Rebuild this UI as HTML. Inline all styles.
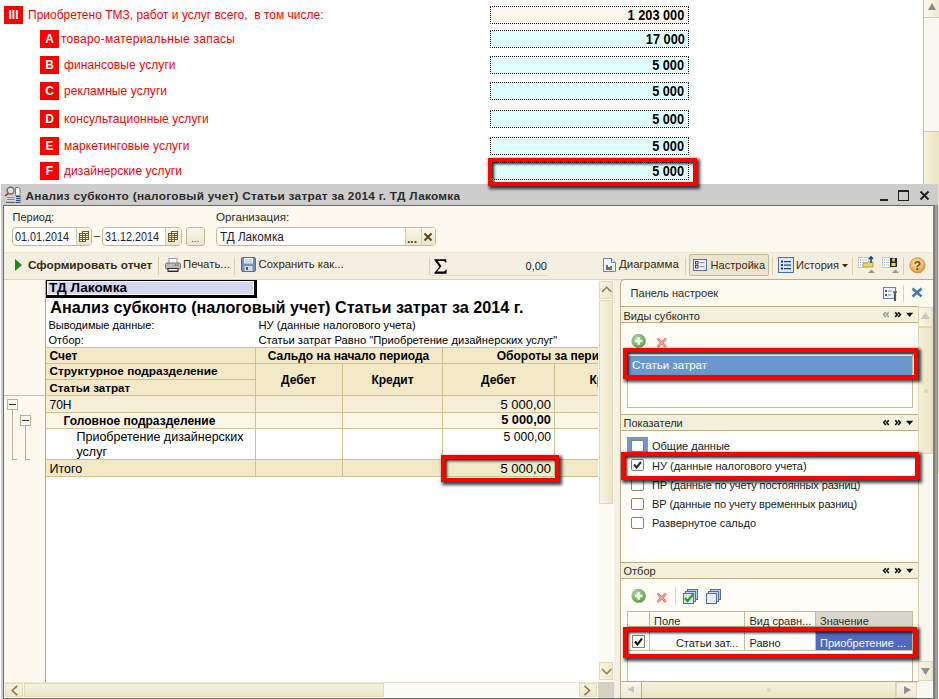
<!DOCTYPE html>
<html><head><meta charset="utf-8"><style>
*{margin:0;padding:0;box-sizing:border-box}
html,body{width:939px;height:699px;overflow:hidden;background:#fff}
body{position:relative;font-family:"Liberation Sans",sans-serif}
.a{position:absolute}
.t{position:absolute;white-space:nowrap;line-height:1}
</style></head><body>
<div class="a" style="left:4px;top:6px;width:19px;height:18px;background:#ff0000"></div>
<div class="t" style="left:-286.5px;width:600px;text-align:center;top:8.84px;font-size:12px;font-weight:bold;color:#fff;">III</div>
<div class="t" style="left:28px;top:8.84px;font-size:12px;font-weight:normal;color:#ff0000;">Приобретено ТМЗ, работ и услуг всего,&nbsp; в том числе:</div>
<div class="a" style="left:490px;top:6px;width:199px;height:18px;background:#fff8ee;border:1px dotted #000;border-radius:1px"></div>
<div class="t" style="right:254.5px;top:8.35px;font-size:14px;font-weight:bold;color:#000;transform:scaleX(0.91);transform-origin:100% 50%">1 203 000</div>
<div class="a" style="left:40px;top:30px;width:19px;height:18px;background:#ff0000"></div>
<div class="t" style="left:-250.5px;width:600px;text-align:center;top:32.84px;font-size:12px;font-weight:bold;color:#fff;">A</div>
<div class="t" style="left:61px;top:32.84px;font-size:12px;font-weight:normal;color:#ff0000;letter-spacing:0.25px">товаро-материальные запасы</div>
<div class="a" style="left:490px;top:30px;width:199px;height:18px;background:#e0ffff;border:1px dotted #000;border-radius:1px"></div>
<div class="t" style="right:254.5px;top:32.35px;font-size:14px;font-weight:bold;color:#000;transform:scaleX(0.91);transform-origin:100% 50%">17 000</div>
<div class="a" style="left:40px;top:56px;width:19px;height:18px;background:#ff0000"></div>
<div class="t" style="left:-250.5px;width:600px;text-align:center;top:58.84px;font-size:12px;font-weight:bold;color:#fff;">B</div>
<div class="t" style="left:64px;top:58.84px;font-size:12px;font-weight:normal;color:#ff0000;letter-spacing:0.08px">финансовые услуги</div>
<div class="a" style="left:490px;top:56px;width:199px;height:18px;background:#e0ffff;border:1px dotted #000;border-radius:1px"></div>
<div class="t" style="right:254.5px;top:58.35px;font-size:14px;font-weight:bold;color:#000;transform:scaleX(0.91);transform-origin:100% 50%">5 000</div>
<div class="a" style="left:40px;top:82px;width:19px;height:18px;background:#ff0000"></div>
<div class="t" style="left:-250.5px;width:600px;text-align:center;top:84.84px;font-size:12px;font-weight:bold;color:#fff;">C</div>
<div class="t" style="left:64px;top:84.84px;font-size:12px;font-weight:normal;color:#ff0000;letter-spacing:0.08px">рекламные услуги</div>
<div class="a" style="left:490px;top:82px;width:199px;height:18px;background:#e0ffff;border:1px dotted #000;border-radius:1px"></div>
<div class="t" style="right:254.5px;top:84.35px;font-size:14px;font-weight:bold;color:#000;transform:scaleX(0.91);transform-origin:100% 50%">5 000</div>
<div class="a" style="left:40px;top:110px;width:19px;height:18px;background:#ff0000"></div>
<div class="t" style="left:-250.5px;width:600px;text-align:center;top:112.84px;font-size:12px;font-weight:bold;color:#fff;">D</div>
<div class="t" style="left:64px;top:112.84px;font-size:12px;font-weight:normal;color:#ff0000;letter-spacing:0.08px">консультационные услуги</div>
<div class="a" style="left:490px;top:110px;width:199px;height:18px;background:#e0ffff;border:1px dotted #000;border-radius:1px"></div>
<div class="t" style="right:254.5px;top:112.35px;font-size:14px;font-weight:bold;color:#000;transform:scaleX(0.91);transform-origin:100% 50%">5 000</div>
<div class="a" style="left:40px;top:137px;width:19px;height:18px;background:#ff0000"></div>
<div class="t" style="left:-250.5px;width:600px;text-align:center;top:139.84px;font-size:12px;font-weight:bold;color:#fff;">E</div>
<div class="t" style="left:64px;top:139.84px;font-size:12px;font-weight:normal;color:#ff0000;letter-spacing:0.08px">маркетинговые услуги</div>
<div class="a" style="left:490px;top:137px;width:199px;height:18px;background:#e0ffff;border:1px dotted #000;border-radius:1px"></div>
<div class="t" style="right:254.5px;top:139.35px;font-size:14px;font-weight:bold;color:#000;transform:scaleX(0.91);transform-origin:100% 50%">5 000</div>
<div class="a" style="left:40px;top:162px;width:19px;height:18px;background:#ff0000"></div>
<div class="t" style="left:-250.5px;width:600px;text-align:center;top:164.84px;font-size:12px;font-weight:bold;color:#fff;">F</div>
<div class="t" style="left:64px;top:164.84px;font-size:12px;font-weight:normal;color:#ff0000;letter-spacing:0.08px">дизайнерские услуги</div>
<div class="a" style="left:490px;top:162px;width:199px;height:18px;background:#e0ffff;border:1px dotted #000;border-radius:1px"></div>
<div class="t" style="right:254.5px;top:164.35px;font-size:14px;font-weight:bold;color:#000;transform:scaleX(0.91);transform-origin:100% 50%">5 000</div>
<div class="a" style="left:923px;top:0px;width:16px;height:184px;background:#f8f7f1;border-left:1px solid #c8c1a0"></div>
<div class="a" style="left:924px;top:0px;width:15px;height:18px;background:linear-gradient(90deg,#fbf9ef,#efe9cf);border-bottom:1px solid #d3cca8"></div>
<svg class="a" style="left:927px;top:3px" width="10" height="10" viewBox="0 0 10 10"><path d="M5 0 L9 7 L1 7 Z" fill="#8a8a8a"/></svg>
<div class="a" style="left:924px;top:131px;width:15px;height:53px;background:linear-gradient(90deg,#f6f2dc,#ebe4c2);border-top:1px solid #d3cca8"></div>
<div class="a" style="left:1px;top:184px;width:937px;height:515px;background:#cdcdcd"></div>
<div class="t" style="left:25.5px;top:191.01px;font-size:11.8px;font-weight:bold;color:#2b2b2b;letter-spacing:0.28px">Анализ субконто (налоговый учет) Статьи затрат за 2014 г. ТД Лакомка</div>
<div class="a" style="left:880px;top:199px;width:8px;height:2px;background:#222"></div>
<div class="a" style="left:898px;top:190px;width:11px;height:11px;border:1px solid #222;border-top-width:2px"></div>
<svg class="a" style="left:919px;top:190px" width="11" height="11" viewBox="0 0 11 11"><path d="M1.5 1.5 L9.5 9.5 M9.5 1.5 L1.5 9.5" stroke="#222" stroke-width="2"/></svg>
<div class="a" style="left:3px;top:205px;width:932px;height:494px;background:#fdf9ee;border-left:1px solid #6a6a6a;border-top:1px solid #6a6a6a;border-right:1px solid #6a6a6a;border-bottom:1px solid #6a6a6a"></div>
<div class="t" style="left:12.5px;top:211.69px;font-size:11px;font-weight:normal;color:#2a2a2a;">Период:</div>
<div class="t" style="left:216px;top:211.18px;font-size:11.6px;font-weight:normal;color:#2a2a2a;">Организация:</div>
<div class="a" style="left:12px;top:227px;width:80px;height:19px;background:#fff;border:1px solid #c5bb93;border-radius:4px"></div>
<div class="a" style="left:102px;top:227px;width:80px;height:19px;background:#fff;border:1px solid #c5bb93;border-radius:4px"></div>
<div class="a" style="left:186px;top:227px;width:19px;height:19px;background:linear-gradient(#fbf8ec,#ece5cc);border:1px solid #c5bb93;border-radius:3px"></div>
<div class="t" style="left:191px;top:233.53px;font-size:10px;font-weight:normal;color:#555;">...</div>
<div class="t" style="left:15px;top:231.27px;font-size:12.2px;font-weight:normal;color:#1a1a3a;transform:scaleX(0.885);transform-origin:0 50%">01.01.2014</div>
<div class="t" style="left:105px;top:231.27px;font-size:12.2px;font-weight:normal;color:#1a1a3a;transform:scaleX(0.885);transform-origin:0 50%">31.12.2014</div>
<div class="a" style="left:76px;top:228px;width:15px;height:17px;background:linear-gradient(#fbf8ec,#ece5cc);border-left:1px solid #d6cfb0;border-radius:0 2px 2px 0"></div>
<div class="a" style="left:165px;top:228px;width:16px;height:17px;background:linear-gradient(#fbf8ec,#ece5cc);border-left:1px solid #d6cfb0;border-radius:0 2px 2px 0"></div>
<div class="t" style="left:94px;top:229.69px;font-size:11px;font-weight:normal;color:#222;">–</div>
<div class="a" style="left:216px;top:227px;width:220px;height:19px;background:#fff;border:1px solid #c5bb93;border-radius:4px"></div>
<div class="a" style="left:405px;top:228px;width:16px;height:17px;background:linear-gradient(#fbf8ec,#ece5cc);border-left:1px solid #d6cfb0"></div>
<div class="a" style="left:421px;top:228px;width:14px;height:17px;background:linear-gradient(#fbf8ec,#ece5cc);border-left:1px solid #d6cfb0;border-radius:0 2px 2px 0"></div>
<div class="t" style="left:219.5px;top:231.27px;font-size:12.2px;font-weight:normal;color:#1a1a3a;transform:scaleX(0.96);transform-origin:0 50%">ТД Лакомка</div>
<div class="t" style="left:407px;top:232.84px;font-size:12px;font-weight:bold;color:#5a4210;">...</div>
<svg class="a" style="left:423px;top:232px" width="10" height="10" viewBox="0 0 10 10"><path d="M1.5 1.5 L8.5 8.5 M8.5 1.5 L1.5 8.5" stroke="#5a4210" stroke-width="1.8"/></svg>
<div class="a" style="left:4px;top:252px;width:930px;height:28px;background:#f5efe2;border-top:1px solid #ece6d6;border-bottom:1px solid #d8d2c0"></div>
<svg class="a" style="left:15px;top:259px" width="8" height="13" viewBox="0 0 8 13"><path d="M0 0 L7 6 L0 12 Z" fill="#1a8a1a"/></svg>
<div class="t" style="left:28px;top:259.05px;font-size:11.75px;font-weight:bold;color:#3a2a10;">Сформировать отчет</div>
<div class="t" style="left:183px;top:259.35px;font-size:11.4px;font-weight:normal;color:#3a2a10;">Печать...</div>
<div class="t" style="left:258.5px;top:259.43px;font-size:11.3px;font-weight:normal;color:#3a2a10;">Сохранить как...</div>
<div class="t" style="left:619px;top:259.27px;font-size:11.5px;font-weight:normal;color:#3a2a10;">Диаграмма</div>
<div class="t" style="left:796px;top:259.60px;font-size:11.1px;font-weight:normal;color:#3a2a10;">История</div>
<div class="t" style="right:392px;top:260.69px;font-size:11px;font-weight:normal;color:#1a1a3a;">0,00</div>
<svg class="a" style="left:434px;top:259px" width="13" height="15" viewBox="0 0 13 15"><path d="M0.3 0.3 H12.2 L12.4 3.6 H11.4 Q11 1.9 9.2 1.9 H3.6 L7.6 7.2 L3 12.6 H9.6 Q11.4 12.6 11.8 10.8 H12.8 L12.4 14.7 H0.3 V13.9 L5.3 7.8 L0.3 1.1 Z" fill="#000"/></svg>
<div class="a" style="left:4px;top:280px;width:610px;height:418px;background:#fff"></div>
<div class="a" style="left:4px;top:280px;width:42px;height:402px;background:#fdf9ee;border-right:1px solid #b7ad85"></div>
<div class="a" style="left:46px;top:280px;width:552px;height:402px;overflow:hidden">
<div class="a" style="left:0px;top:0px;width:211px;height:18px;background:#000"></div>
<div class="a" style="left:1px;top:1px;width:207px;height:14px;background:#fff"></div>
<div class="a" style="left:2px;top:2px;width:205px;height:12px;background:#d3d7ee"></div>
<div class="t" style="left:3px;top:1.39px;font-size:13.6px;font-weight:bold;color:#000;">ТД Лакомка</div>
<div class="t" style="left:4.299999999999997px;top:18.99px;font-size:16.2px;font-weight:bold;color:#000;">Анализ субконто (налоговый учет) Статьи затрат за 2014 г.</div>
<div class="t" style="left:2.5px;top:39.99px;font-size:11px;font-weight:normal;color:#000;">Выводимые данные:</div>
<div class="t" style="left:212.5px;top:39.82px;font-size:11.2px;font-weight:normal;color:#000;">НУ (данные налогового учета)</div>
<div class="t" style="left:2.5px;top:54.99px;font-size:11px;font-weight:normal;color:#000;">Отбор:</div>
<div class="t" style="left:212.5px;top:54.82px;font-size:11.2px;font-weight:normal;color:#000;">Статьи затрат Равно "Приобретение дизайнерских услуг"</div>
<div class="a" style="left:0px;top:67px;width:552px;height:49px;background:#f3e9c7"></div>
<div class="a" style="left:0px;top:67px;width:552px;height:1px;background:#cfc290"></div>
<div class="a" style="left:0px;top:83px;width:552px;height:1px;background:#cfc290"></div>
<div class="a" style="left:0px;top:99px;width:209px;height:1px;background:#cfc290"></div>
<div class="a" style="left:0px;top:115px;width:552px;height:1px;background:#cfc290"></div>
<div class="a" style="left:209px;top:67px;width:1px;height:16px;background:#cfc290"></div>
<div class="a" style="left:396px;top:67px;width:1px;height:16px;background:#cfc290"></div>
<div class="a" style="left:620px;top:67px;width:1px;height:16px;background:#cfc290"></div>
<div class="a" style="left:209px;top:83px;width:1px;height:32px;background:#cfc290"></div>
<div class="a" style="left:296px;top:83px;width:1px;height:32px;background:#cfc290"></div>
<div class="a" style="left:396px;top:83px;width:1px;height:32px;background:#cfc290"></div>
<div class="a" style="left:508px;top:83px;width:1px;height:32px;background:#cfc290"></div>
<div class="a" style="left:620px;top:83px;width:1px;height:32px;background:#cfc290"></div>
<div class="t" style="left:3.5px;top:69.54px;font-size:12px;font-weight:bold;color:#000;">Счет</div>
<div class="t" style="left:3.5px;top:85.71px;font-size:11.8px;font-weight:bold;color:#000;">Структурное подразделение</div>
<div class="t" style="left:3.5px;top:101.68px;font-size:11.6px;font-weight:bold;color:#000;">Статьи затрат</div>
<div class="t" style="left:2.5px;width:600px;text-align:center;top:69.54px;font-size:12px;font-weight:bold;color:#000;">Сальдо на начало периода</div>
<div class="t" style="left:209.29999999999995px;width:600px;text-align:center;top:69.54px;font-size:12px;font-weight:bold;color:#000;">Обороты за период</div>
<div class="t" style="left:-47.5px;width:600px;text-align:center;top:94.04px;font-size:12px;font-weight:bold;color:#000;">Дебет</div>
<div class="t" style="left:46.5px;width:600px;text-align:center;top:94.04px;font-size:12px;font-weight:bold;color:#000;">Кредит</div>
<div class="t" style="left:152.5px;width:600px;text-align:center;top:94.04px;font-size:12px;font-weight:bold;color:#000;">Дебет</div>
<div class="t" style="left:264.5px;width:600px;text-align:center;top:94.04px;font-size:12px;font-weight:bold;color:#000;">Кредит</div>
<div class="a" style="left:0px;top:116px;width:552px;height:16px;background:#f6eed6"></div>
<div class="a" style="left:0px;top:132px;width:552px;height:1px;background:#cfc290"></div>
<div class="a" style="left:0px;top:133px;width:552px;height:15px;background:#faf6e8"></div>
<div class="a" style="left:0px;top:148px;width:552px;height:1px;background:#cfc290"></div>
<div class="a" style="left:0px;top:149px;width:552px;height:30px;background:#ffffff"></div>
<div class="a" style="left:0px;top:179px;width:552px;height:1px;background:#cfc290"></div>
<div class="a" style="left:0px;top:180px;width:552px;height:16px;background:#f3e9c7"></div>
<div class="a" style="left:0px;top:196px;width:552px;height:1px;background:#cfc290"></div>
<div class="a" style="left:209px;top:116px;width:1px;height:81px;background:#cfc290"></div>
<div class="a" style="left:296px;top:116px;width:1px;height:81px;background:#cfc290"></div>
<div class="a" style="left:396px;top:116px;width:1px;height:81px;background:#cfc290"></div>
<div class="a" style="left:508px;top:116px;width:1px;height:81px;background:#cfc290"></div>
<div class="a" style="left:620px;top:116px;width:1px;height:81px;background:#cfc290"></div>
<div class="t" style="left:3.5px;top:119.14px;font-size:12px;font-weight:normal;color:#000;">70H</div>
<div class="t" style="left:17.5px;top:134.64px;font-size:12px;font-weight:bold;color:#000;">Головное подразделение</div>
<div class="t" style="left:30.5px;top:150.62px;font-size:12.5px;font-weight:normal;color:#000;">Приобретение дизайнерских</div>
<div class="t" style="left:30.5px;top:165.82px;font-size:12.5px;font-weight:normal;color:#000;">услуг</div>
<div class="t" style="left:3.5px;top:182.82px;font-size:12.5px;font-weight:normal;color:#000;">Итого</div>
<div class="t" style="right:47px;top:118.30px;font-size:13px;font-weight:normal;color:#000;">5 000,00</div>
<div class="t" style="right:47px;top:134.36px;font-size:12.8px;font-weight:bold;color:#000;">5 000,00</div>
<div class="t" style="right:47px;top:150.87px;font-size:12.2px;font-weight:normal;color:#000;">5 000,00</div>
<div class="t" style="right:47px;top:182.40px;font-size:13px;font-weight:normal;color:#000;">5 000,00</div>
</div>
<div class="a" style="left:598px;top:280px;width:16px;height:402px;background:#fbfaf4"></div>
<div class="a" style="left:599px;top:281px;width:14px;height:18px;background:linear-gradient(90deg,#f6f3df,#eee8cc);border:1px solid #e3dcb8"></div>
<svg class="a" style="left:601px;top:285px" width="12" height="9" viewBox="0 0 12 9"><path d="M1 7 L5.7 2.3 L10.4 7" stroke="#8c7b52" stroke-width="1.5" fill="none"/></svg>
<div class="a" style="left:599px;top:300px;width:14px;height:204px;background:linear-gradient(90deg,#f6f3df,#ede6c8);border:1px solid #e3dcb8"></div>
<div class="a" style="left:599px;top:662px;width:14px;height:18px;background:linear-gradient(90deg,#f6f3df,#eee8cc);border:1px solid #e3dcb8"></div>
<svg class="a" style="left:601px;top:667px" width="12" height="9" viewBox="0 0 12 9"><path d="M1 2 L5.7 6.7 L10.4 2" stroke="#8c7b52" stroke-width="1.5" fill="none"/></svg>
<div class="a" style="left:4px;top:682px;width:610px;height:16px;background:#fcfbf6;border-top:1px solid #efe9d2"></div>
<div class="a" style="left:5px;top:683px;width:18px;height:14px;background:linear-gradient(#f6f3df,#eee8cc);border:1px solid #e3dcb8"></div>
<svg class="a" style="left:8px;top:684px" width="12" height="12" viewBox="0 0 12 12"><path d="M9.2 1.8 L4.2 6.5 L9.2 11.2" stroke="#8c7b52" stroke-width="1.6" fill="none"/></svg>
<div class="a" style="left:24px;top:683px;width:360px;height:14px;background:linear-gradient(#f6f3df,#ede6c8);border:1px solid #e3dcb8"></div>
<div class="a" style="left:579px;top:683px;width:18px;height:14px;background:linear-gradient(#f6f3df,#eee8cc);border:1px solid #e3dcb8"></div>
<svg class="a" style="left:582px;top:684px" width="12" height="12" viewBox="0 0 12 12"><path d="M2.5 1.8 L7.5 6.5 L2.5 11.2" stroke="#8c7b52" stroke-width="1.6" fill="none"/></svg>
<div class="a" style="left:598px;top:682px;width:16px;height:16px;background:#d6d2c0"></div>
<div class="a" style="left:614px;top:280px;width:6px;height:419px;background:#f6f0e4"></div>
<div class="a" style="left:620px;top:279px;width:314px;height:420px;background:#fdfaf0;border-left:1px solid #b9ae86;border-top:1px solid #b9ae86;border-radius:5px 0 0 0"></div>
<div class="t" style="left:630.5px;top:287.60px;font-size:11.1px;font-weight:normal;color:#2a2a2a;">Панель настроек</div>
<div class="a" style="left:903px;top:285px;width:1px;height:17px;background:#d8d2bc"></div>
<svg class="a" style="left:882px;top:286px" width="17" height="16" viewBox="0 0 17 16"><rect x="1.5" y="1.5" width="12" height="11" fill="#eef0fa" stroke="#6d7fb0"/><rect x="3" y="4" width="2" height="2" fill="#556"/><rect x="3" y="8" width="2" height="2" fill="#556"/><path d="M6 5 H10 M6 9 H9" stroke="#889" /><path d="M13 7 L13 15" stroke="#555" stroke-width="2.2"/><path d="M11 6 L15 6" stroke="#555" stroke-width="1.5"/></svg>
<svg class="a" style="left:911px;top:287px" width="12" height="11" viewBox="0 0 12 11"><path d="M1.5 1.5 L10.5 9.5 M10.5 1.5 L1.5 9.5" stroke="#3a78b8" stroke-width="2.4"/></svg>
<div class="a" style="left:621px;top:306px;width:297px;height:17px;background:#f3f0dc;border-top:1px solid #b9ae86;border-bottom:1px solid #b9ae86"></div>
<div class="t" style="left:623.5px;top:311.19px;font-size:11px;font-weight:normal;color:#2a2a2a;">Виды субконто</div>
<svg class="a" style="left:882px;top:310px" width="32" height="10" viewBox="0 0 32 10"><path d="M3.8 2.2 L1.6 4.6 L3.8 7 M6.8 2.2 L4.6 4.6 L6.8 7" stroke="#9c9c9c" stroke-width="1.6" fill="none"/><path d="M13.2 2.2 L15.4 4.6 L13.2 7 M16.2 2.2 L18.4 4.6 L16.2 7" stroke="#111" stroke-width="1.6" fill="none"/><path d="M24 2.8 L31.2 2.8 L27.6 7 Z" fill="#111"/></svg>
<div class="a" style="left:621px;top:323px;width:297px;height:91px;background:#fffdf6"></div>
<div class="a" style="left:621px;top:414px;width:297px;height:17px;background:#f3f0dc;border-top:1px solid #b9ae86;border-bottom:1px solid #b9ae86"></div>
<div class="t" style="left:623.5px;top:417.69px;font-size:11px;font-weight:normal;color:#2a2a2a;">Показатели</div>
<svg class="a" style="left:882px;top:418px" width="32" height="10" viewBox="0 0 32 10"><path d="M3.8 2.2 L1.6 4.6 L3.8 7 M6.8 2.2 L4.6 4.6 L6.8 7" stroke="#111" stroke-width="1.6" fill="none"/><path d="M13.2 2.2 L15.4 4.6 L13.2 7 M16.2 2.2 L18.4 4.6 L16.2 7" stroke="#111" stroke-width="1.6" fill="none"/><path d="M24 2.8 L31.2 2.8 L27.6 7 Z" fill="#111"/></svg>
<div class="a" style="left:621px;top:431px;width:297px;height:131px;background:#fffdf6"></div>
<div class="a" style="left:621px;top:562px;width:297px;height:17px;background:#f3f0dc;border-top:1px solid #b9ae86;border-bottom:1px solid #b9ae86"></div>
<div class="t" style="left:623.5px;top:566.19px;font-size:11px;font-weight:normal;color:#2a2a2a;">Отбор</div>
<svg class="a" style="left:882px;top:566px" width="32" height="10" viewBox="0 0 32 10"><path d="M3.8 2.2 L1.6 4.6 L3.8 7 M6.8 2.2 L4.6 4.6 L6.8 7" stroke="#111" stroke-width="1.6" fill="none"/><path d="M13.2 2.2 L15.4 4.6 L13.2 7 M16.2 2.2 L18.4 4.6 L16.2 7" stroke="#111" stroke-width="1.6" fill="none"/><path d="M24 2.8 L31.2 2.8 L27.6 7 Z" fill="#111"/></svg>
<div class="a" style="left:621px;top:579px;width:297px;height:120px;background:#fffdf6"></div>
<div class="a" style="left:918px;top:306px;width:15px;height:376px;background:#f8f7f0;border-left:1px solid #d4ceb0"></div>
<div class="a" style="left:918px;top:307px;width:15px;height:20px;background:linear-gradient(90deg,#f9f7ea,#efe9cf);border:1px solid #e0d9b8"></div>
<svg class="a" style="left:920px;top:311px" width="11" height="10" viewBox="0 0 11 10"><path d="M5.5 1 L10 8 L1 8 Z" fill="#c9c9c2"/></svg>
<div class="a" style="left:918px;top:327px;width:15px;height:127px;background:linear-gradient(90deg,#f5f1da,#ebe4c2);border:1px solid #e0d9b8"></div>
<div class="a" style="left:924px;top:389px;width:4px;height:4px;background:#d8d4c4;border-radius:2px"></div>
<div class="a" style="left:918px;top:661px;width:15px;height:20px;background:linear-gradient(90deg,#f9f7ea,#efe9cf);border:1px solid #e0d9b8"></div>
<svg class="a" style="left:920px;top:666px" width="11" height="10" viewBox="0 0 11 10"><path d="M1 2 L10 2 L5.5 9 Z" fill="#8e8e8e"/></svg>
<div class="a" style="left:918px;top:682px;width:16px;height:16px;background:#f8f7f0"></div>
<div class="a" style="left:934px;top:205px;width:4px;height:494px;background:linear-gradient(90deg,#6e6e6e,#a9a9a9,#8a8a8a)"></div>
<svg class="a" style="left:631px;top:334px" width="16" height="14" viewBox="0 0 16 14"><defs><radialGradient id="pg1" cx="40%" cy="35%" r="70%"><stop offset="0" stop-color="#b8e0a8"/><stop offset="1" stop-color="#4f9a3e"/></radialGradient></defs><circle cx="7.7" cy="7" r="6.8" fill="url(#pg1)" stroke="#8aa882" stroke-width="0.8"/><path d="M7.7 3.2 V10.8 M3.9 7 H11.5" stroke="#fff" stroke-width="2.4"/></svg>
<svg class="a" style="left:656px;top:337px" width="12" height="12" viewBox="0 0 12 12"><path d="M1.5 1.5 L10 10 M10 1.5 L1.5 10" stroke="#e27d73" stroke-width="2.6"/><path d="M1.5 1.5 L10 10 M10 1.5 L1.5 10" stroke="#f5b7ae" stroke-width="0.9"/></svg>
<div class="a" style="left:627px;top:353px;width:286px;height:55px;background:#fff;border:1px solid #c6bc95"></div>
<div class="a" style="left:628px;top:356px;width:284px;height:19px;background:#6a97cd"></div>
<div class="t" style="left:632px;top:359.87px;font-size:11.5px;font-weight:normal;color:#fff;">Статьи затрат</div>
<div class="a" style="left:627px;top:436px;width:286px;height:120px;background:#fff"></div>
<div class="a" style="left:627px;top:437px;width:21px;height:16px;background:#6d98d0"></div>
<div class="a" style="left:631px;top:440px;width:13px;height:12px;background:#fff;border:1px solid #8d8468;border-radius:2px"></div>
<div class="a" style="left:631px;top:459px;width:13px;height:12px;background:#fff;border:1px solid #8d8468;border-radius:2px"></div>
<svg class="a" style="left:631px;top:459px" width="13" height="12" viewBox="0 0 13 12"><path d="M3 5.5 L5.5 8.5 L10 3" stroke="#333" stroke-width="2.2" fill="none"/></svg>
<div class="a" style="left:631px;top:479px;width:13px;height:12px;background:#fff;border:1px solid #8d8468;border-radius:2px"></div>
<div class="a" style="left:631px;top:498px;width:13px;height:12px;background:#fff;border:1px solid #8d8468;border-radius:2px"></div>
<div class="a" style="left:631px;top:516.5px;width:13px;height:12px;background:#fff;border:1px solid #8d8468;border-radius:2px"></div>
<div class="t" style="left:652px;top:441.29px;font-size:11px;font-weight:normal;color:#1a1a1a;">Общие данные</div>
<div class="t" style="left:652px;top:461.29px;font-size:11px;font-weight:normal;color:#1a1a1a;">НУ (данные налогового учета)</div>
<div class="t" style="left:652px;top:480.29px;font-size:11px;font-weight:normal;color:#1a1a1a;letter-spacing:-0.1px">ПР (данные по учету постоянных разниц)</div>
<div class="t" style="left:652px;top:498.59px;font-size:11px;font-weight:normal;color:#1a1a1a;letter-spacing:-0.1px">ВР (данные по учету временных разниц)</div>
<div class="t" style="left:652px;top:517.59px;font-size:11px;font-weight:normal;color:#1a1a1a;">Развернутое сальдо</div>
<svg class="a" style="left:631px;top:589px" width="16" height="14" viewBox="0 0 16 14"><defs><radialGradient id="pg2" cx="40%" cy="35%" r="70%"><stop offset="0" stop-color="#b8e0a8"/><stop offset="1" stop-color="#4f9a3e"/></radialGradient></defs><circle cx="7.7" cy="7" r="6.8" fill="url(#pg2)" stroke="#8aa882" stroke-width="0.8"/><path d="M7.7 3.2 V10.8 M3.9 7 H11.5" stroke="#fff" stroke-width="2.4"/></svg>
<svg class="a" style="left:656px;top:592px" width="12" height="12" viewBox="0 0 12 12"><path d="M1.5 1.5 L10 10 M10 1.5 L1.5 10" stroke="#e27d73" stroke-width="2.6"/><path d="M1.5 1.5 L10 10 M10 1.5 L1.5 10" stroke="#f5b7ae" stroke-width="0.9"/></svg>
<div class="a" style="left:675px;top:587px;width:1px;height:18px;background:#dcd6c0"></div>
<svg class="a" style="left:682px;top:588px" width="17" height="17" viewBox="0 0 17 17"><rect x="5.5" y="1.5" width="10" height="10" fill="#b9cbe0" stroke="#52709a"/><rect x="3.5" y="3.5" width="10" height="10" fill="#c9d9ea" stroke="#52709a"/><rect x="1.5" y="5.5" width="10" height="10" fill="#dde8f3" stroke="#52709a"/><path d="M3 10 L5.5 13 L11 6.5" stroke="#2e9a2e" stroke-width="2.2" fill="none"/></svg>
<svg class="a" style="left:705px;top:588px" width="17" height="17" viewBox="0 0 17 17"><rect x="5.5" y="1.5" width="10" height="10" fill="#b9cbe0" stroke="#52709a"/><rect x="3.5" y="3.5" width="10" height="10" fill="#c9d9ea" stroke="#52709a"/><rect x="1.5" y="5.5" width="10" height="10" fill="#e6eef7" stroke="#52709a"/></svg>
<div class="a" style="left:627px;top:611px;width:286px;height:71px;background:#fff;border:1px solid #c6bc95"></div>
<div class="a" style="left:628px;top:612px;width:284px;height:15px;background:#fdfaf0"></div>
<div class="a" style="left:816px;top:612px;width:96px;height:15px;background:#d9d6cc"></div>
<div class="a" style="left:628px;top:626px;width:284px;height:1px;background:#c6bc95"></div>
<div class="a" style="left:649px;top:612px;width:1px;height:39px;background:#c6bc95"></div>
<div class="a" style="left:744px;top:612px;width:1px;height:39px;background:#c6bc95"></div>
<div class="a" style="left:815px;top:612px;width:1px;height:39px;background:#c6bc95"></div>
<div class="a" style="left:628px;top:650px;width:284px;height:1px;background:#c6bc95"></div>
<div class="a" style="left:816px;top:631px;width:96px;height:19px;background:#5168c2"></div>
<div class="t" style="left:654px;top:616.19px;font-size:11px;font-weight:normal;color:#2a2a2a;">Поле</div>
<div class="t" style="left:749.5px;top:616.19px;font-size:11px;font-weight:normal;color:#2a2a2a;">Вид сравн...</div>
<div class="t" style="left:820px;top:616.19px;font-size:11px;font-weight:normal;color:#2a2a2a;">Значение</div>
<div class="a" style="left:632px;top:635px;width:13px;height:13px;background:#fff;border:1px solid #8d8468"></div>
<svg class="a" style="left:632px;top:635px" width="13" height="13" viewBox="0 0 13 13"><path d="M3 6.5 L5.5 9.5 L10 3.5" stroke="#000" stroke-width="2" fill="none"/></svg>
<div class="t" style="right:200.5px;top:637.69px;font-size:11px;font-weight:normal;color:#1a1a1a;">Статьи зат...</div>
<div class="t" style="left:749.5px;top:637.69px;font-size:11px;font-weight:normal;color:#1a1a1a;">Равно</div>
<div class="t" style="left:820px;top:637.69px;font-size:11px;font-weight:normal;color:#fff;">Приобретение ...</div>
<div class="a" style="left:621px;top:681px;width:297px;height:17px;background:#f8f7f0;border-top:1px solid #b9ae86"></div>
<div class="a" style="left:621px;top:682px;width:21px;height:16px;background:linear-gradient(#f9f7ee,#efe9cf);border-right:1px solid #b9ae86"></div>
<svg class="a" style="left:626px;top:685px" width="10" height="9" viewBox="0 0 10 9"><path d="M1 4.5 L8 1 L8 8 Z" fill="#c9c9c2"/></svg>
<div class="a" style="left:642px;top:682px;width:254px;height:16px;background:linear-gradient(#f5f1da,#ebe4c2);border-right:1px solid #d9d2b0"></div>
<div class="a" style="left:767px;top:688px;width:4px;height:4px;background:#d8d4c4;border-radius:2px"></div>
<div class="a" style="left:896px;top:682px;width:21px;height:16px;background:linear-gradient(#f9f7ea,#efe9cf);border:1px solid #e0d9b8"></div>
<svg class="a" style="left:902px;top:685px" width="11" height="10" viewBox="0 0 11 10"><path d="M2 1 L9 5 L2 9 Z" fill="#8e8e8e"/></svg>
<div class="a" style="left:623px;top:348px;width:295px;height:31px;border:4px solid #ff0000;box-shadow:2px 2px 3px 1px rgba(0,0,0,0.75), inset 2px 2px 3px rgba(0,0,0,0.85)"></div>
<div class="a" style="left:621px;top:452px;width:298px;height:28px;border:4px solid #ff0000;box-shadow:2px 2px 3px 1px rgba(0,0,0,0.75), inset 2px 2px 3px rgba(0,0,0,0.85)"></div>
<div class="a" style="left:623px;top:627px;width:294px;height:31px;border:4px solid #ff0000;box-shadow:2px 2px 3px 1px rgba(0,0,0,0.75), inset 2px 2px 3px rgba(0,0,0,0.85)"></div>
<div class="a" style="left:441px;top:455px;width:118px;height:27px;border:4px solid #ff0000;box-shadow:2px 2px 3px 1px rgba(0,0,0,0.75), inset 2px 2px 3px rgba(0,0,0,0.85)"></div>
<div class="a" style="left:488px;top:158px;width:209px;height:28px;border:4px solid #ff0000;box-shadow:2px 2px 3px 1px rgba(0,0,0,0.75), inset 2px 2px 3px rgba(0,0,0,0.85)"></div>
<svg class="a" style="left:4px;top:186px" width="18" height="18" viewBox="0 0 18 18"><path d="M11.5 1.5 H14.5 L16 3 V9.5 H11.5 Z" fill="#fff" stroke="#7a7a7a" stroke-width="1"/><circle cx="6.6" cy="4.6" r="3.5" fill="#cfe0f6" stroke="#8b5a2b" stroke-width="1.3"/><path d="M4 7.3 L1.2 10" stroke="#8b5a2b" stroke-width="1.8"/><rect x="2" y="10" width="9.5" height="6.5" fill="#d9dbe6"/><path d="M3 11.5 H10.5 M3 13.5 H10.5" stroke="#777" stroke-width="0.9"/><path d="M2 16.3 H11.5" stroke="#444" stroke-width="1"/><rect x="12" y="10" width="4.5" height="7" fill="#3d4a6a"/><path d="M12 11.5 H16.5 M12 13.5 H16.5 M12 15.5 H16.5" stroke="#f0c040" stroke-width="1"/></svg>
<svg class="a" style="left:79px;top:231px" width="11" height="11" viewBox="0 0 11 11"><g fill="#fff8e0" stroke="#7a5a14" stroke-width="1"><rect x="3.5" y="0.5" width="6" height="8"/><rect x="0.5" y="2.5" width="6" height="8"/></g><path d="M1 4.5 H6 M1 6.5 H6 M1 8.5 H6 M7 2.5 H9 M7 4.5 H9 M7 6.5 H9 M3.5 3 V10" stroke="#7a5a14" stroke-width="1"/></svg>
<svg class="a" style="left:168px;top:231px" width="11" height="11" viewBox="0 0 11 11"><g fill="#fff8e0" stroke="#7a5a14" stroke-width="1"><rect x="3.5" y="0.5" width="6" height="8"/><rect x="0.5" y="2.5" width="6" height="8"/></g><path d="M1 4.5 H6 M1 6.5 H6 M1 8.5 H6 M7 2.5 H9 M7 4.5 H9 M7 6.5 H9 M3.5 3 V10" stroke="#7a5a14" stroke-width="1"/></svg>
<svg class="a" style="left:165px;top:258px" width="16" height="15" viewBox="0 0 16 15"><rect x="4" y="0.5" width="8" height="5" fill="#fff" stroke="#999"/><rect x="0.5" y="5" width="15" height="6" rx="1.5" fill="#b9b9b9" stroke="#777"/><rect x="2.5" y="10" width="11" height="4" fill="#2a2a2a"/><rect x="3.5" y="11" width="9" height="1.5" fill="#fff"/><circle cx="10.5" cy="7.2" r="0.9" fill="#e33"/><circle cx="12.8" cy="7.2" r="0.9" fill="#3b3"/></svg>
<div class="a" style="left:234px;top:257px;width:1px;height:18px;background:#d9cfb0"></div>
<div class="a" style="left:158px;top:257px;width:1px;height:18px;background:#d9cfb0"></div>
<svg class="a" style="left:241px;top:257px" width="15" height="15" viewBox="0 0 15 15"><rect x="0.5" y="0.5" width="14" height="14" rx="1.5" fill="#6f93c0" stroke="#4f6f9a"/><rect x="3" y="1" width="9" height="5.5" fill="#eef3fa"/><path d="M4 3 H11 M4 5 H11" stroke="#9fb6d6" stroke-width="0.8"/><rect x="3.5" y="9" width="8" height="5" fill="#d7dde6"/><rect x="5" y="10" width="2" height="3" fill="#555"/></svg>
<div class="a" style="left:429px;top:257px;width:1px;height:18px;background:#d9cfb0"></div>
<div class="a" style="left:431px;top:275px;width:118px;height:1px;background:#e2dcc8"></div>
<svg class="a" style="left:603px;top:258px" width="13" height="14" viewBox="0 0 13 14"><path d="M0.5 0.5 H8.5 L12.5 4.5 V13.5 H0.5 Z" fill="#f4f7fc" stroke="#6a84ac"/><path d="M8.5 0.5 V4.5 H12.5" fill="#dde6f2" stroke="#6a84ac"/><rect x="3" y="7" width="2" height="5" fill="#3d6fd0"/><rect x="5" y="9" width="2" height="3" fill="#e04040"/><rect x="7" y="8" width="2" height="4" fill="#3aa03a"/></svg>
<div class="a" style="left:685px;top:257px;width:1px;height:18px;background:#d9cfb0"></div>
<div class="a" style="left:689px;top:254px;width:80px;height:22px;background:#ebe5d0;border:1px solid #c2b996;border-radius:2px"></div>
<svg class="a" style="left:693px;top:259px" width="14" height="12" viewBox="0 0 14 12"><rect x="0.5" y="0.5" width="13" height="11" fill="#eef1fa" stroke="#5d6fa6"/><rect x="2.5" y="2.5" width="2.5" height="2.5" fill="none" stroke="#334" stroke-width="0.9"/><rect x="2.5" y="6.5" width="2.5" height="2.5" fill="none" stroke="#334" stroke-width="0.9"/><path d="M6.5 3.7 H11.5 M6.5 7.7 H11.5" stroke="#889" stroke-width="1"/></svg>
<div class="t" style="left:710.5px;top:259.60px;font-size:11.1px;font-weight:normal;color:#3a2a10;">Настройка</div>
<div class="a" style="left:772px;top:257px;width:1px;height:18px;background:#d9cfb0"></div>
<svg class="a" style="left:778px;top:257px" width="16" height="16" viewBox="0 0 16 16"><rect x="0.5" y="0.5" width="15" height="15" fill="#dbe8f6" stroke="#4e6f9c"/><g fill="#1d3d6e"><rect x="3" y="3.5" width="2" height="2"/><rect x="3" y="7" width="2" height="2"/><rect x="3" y="10.5" width="2" height="2"/><rect x="6" y="4" width="7" height="1.2"/><rect x="6" y="7.5" width="7" height="1.2"/><rect x="6" y="11" width="7" height="1.2"/></g></svg>
<svg class="a" style="left:842px;top:264px" width="6" height="4" viewBox="0 0 6 4"><path d="M0 0 H6 L3 3.5 Z" fill="#3a2a10"/></svg>
<div class="a" style="left:852px;top:257px;width:1px;height:18px;background:#d9cfb0"></div>
<svg class="a" style="left:858px;top:256px" width="18" height="18" viewBox="0 0 18 18"><rect x="0.5" y="1.5" width="10" height="10" fill="#fff" stroke="#c8c8c8"/><path d="M2 4 H3 M2 6.5 H3 M2 9 H3" stroke="#6a8ac0" stroke-width="1"/><path d="M4 4 H9 M4 6.5 H9 M4 9 H9" stroke="#c9c9c9"/><path d="M5 7 H10 L11 6 H15 V11 H5 Z" fill="#e8d56a" stroke="#b59a2a" stroke-width="0.8"/><path d="M13 1 V7 M11 3 L13 0.8 L15 3" stroke="#1a3a8a" stroke-width="1.5" fill="none"/><path d="M10 17 L13.5 13.5 L17 17 Z" fill="#9a9a80"/></svg>
<svg class="a" style="left:882px;top:256px" width="18" height="18" viewBox="0 0 18 18"><rect x="0.5" y="1.5" width="10" height="10" fill="#fff" stroke="#c8c8c8"/><path d="M2 4 H3 M2 6.5 H3 M2 9 H3" stroke="#6a8ac0" stroke-width="1"/><path d="M4 4 H8 M4 6.5 H8 M4 9 H8" stroke="#c9c9c9"/><rect x="8" y="2" width="7" height="9" fill="#2a2a2a"/><rect x="10" y="2.5" width="3" height="3" fill="#b8b89a"/><rect x="9.5" y="7" width="4" height="3" fill="#e9e04a"/><path d="M10 17 L13.5 13.5 L17 17 Z" fill="#9a9a80"/></svg>
<div class="a" style="left:903px;top:257px;width:1px;height:18px;background:#d9cfb0"></div>
<svg class="a" style="left:909px;top:257px" width="17" height="17" viewBox="0 0 17 17"><defs><radialGradient id="hg" cx="45%" cy="35%" r="65%"><stop offset="0" stop-color="#ffe7b8"/><stop offset="1" stop-color="#e39a3a"/></radialGradient></defs><circle cx="8.5" cy="8.3" r="7.6" fill="url(#hg)" stroke="#c9843a" stroke-width="0.8"/><text x="8.5" y="12.6" font-family="Liberation Sans" font-size="12" font-weight="bold" text-anchor="middle" fill="#7a4a1a">?</text></svg>
<div class="a" style="left:4px;top:395px;width:42px;height:1px;background:#c9c3b0"></div>
<div class="a" style="left:7px;top:399px;width:11px;height:11px;background:#fdfaf0;border:1px solid #bdb28a"></div>
<div class="a" style="left:9px;top:404px;width:7px;height:1px;background:#333"></div>
<div class="a" style="left:12px;top:410px;width:1px;height:50px;background:#bdb28a"></div>
<div class="a" style="left:12px;top:459px;width:5px;height:1px;background:#bdb28a"></div>
<div class="a" style="left:20px;top:415px;width:11px;height:11px;background:#fdfaf0;border:1px solid #bdb28a"></div>
<div class="a" style="left:22px;top:420px;width:7px;height:1px;background:#333"></div>
<div class="a" style="left:25px;top:426px;width:1px;height:34px;background:#bdb28a"></div>
<div class="a" style="left:25px;top:459px;width:5px;height:1px;background:#bdb28a"></div>
<div class="a" style="left:938px;top:184px;width:1px;height:290px;background:#ece5c4"></div>
<div class="a" style="left:938px;top:474px;width:1px;height:225px;background:#f8f7f1"></div>
<div class="a" style="left:3px;top:698px;width:932px;height:1px;background:#6a6a6a"></div>
<div class="a" style="left:933px;top:205px;width:1px;height:494px;background:#8a8470"></div>
</body></html>
